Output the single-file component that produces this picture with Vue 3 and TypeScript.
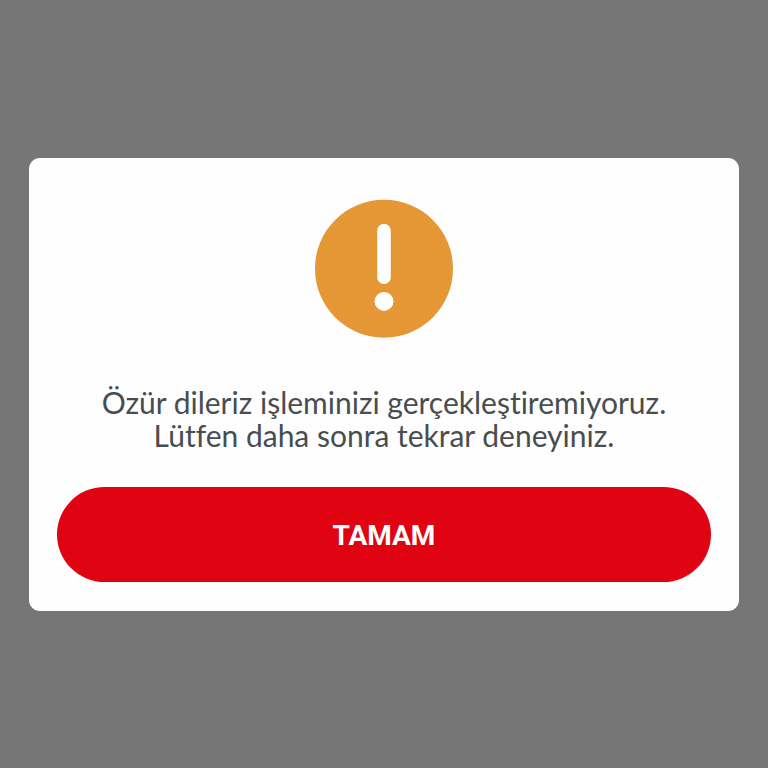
<script setup lang="ts">
import { ref } from 'vue'

const open = ref<boolean>(true)
const lines: string[] = [
  'Özür dileriz işleminizi gerçekleştiremiyoruz.',
  'Lütfen daha sonra tekrar deneyiniz.',
]
</script>

<template>
  <main class="overlay">
    <section v-if="open" class="dialog" role="alertdialog" aria-modal="true" aria-describedby="message">
      <svg class="icon" viewBox="0 0 138 138" aria-hidden="true">
        <circle cx="69" cy="68.7" r="69" fill="#e59635" />
        <rect x="62.2" y="23.7" width="13.6" height="60.3" rx="6.8" fill="#fff" />
        <circle cx="69" cy="101.4" r="9.5" fill="#fff" />
      </svg>
      <p id="message" class="message">
        <span v-for="line in lines" :key="line" class="line">{{ line }}</span>
      </p>
      <button class="confirm" type="button" @click="open = false">TAMAM</button>
    </section>
  </main>
</template>

<style>
body {
  background: #767676;
}
</style>

<style scoped>
.overlay {
  box-sizing: border-box;
  min-height: 100vh;
  padding: 29px;
  display: flex;
  align-items: center;
  background: #767676;
  font-family: Lato, sans-serif;
}
.dialog {
  box-sizing: border-box;
  width: 100%;
  padding: 42px 28px 29px;
  display: flex;
  flex-direction: column;
  align-items: center;
  background: #fefefe;
  border-radius: 11px;
}
.icon {
  width: 138px;
  height: 138px;
  overflow: visible;
}
.message {
  margin: 48px 0 35px;
  color: #484d51;
  font-size: 30px;
  font-variant-ligatures: none;
  line-height: 33px;
  text-align: center;
}
.line {
  display: block;
}
.confirm {
  width: 100%;
  height: 95px;
  padding: 2px 0 0;
  border: 0;
  border-radius: 48px;
  background: #e00312;
  color: #fff;
  font-family: Roboto, sans-serif;
  font-size: 28px;
  font-weight: 700;
  cursor: pointer;
}
</style>
